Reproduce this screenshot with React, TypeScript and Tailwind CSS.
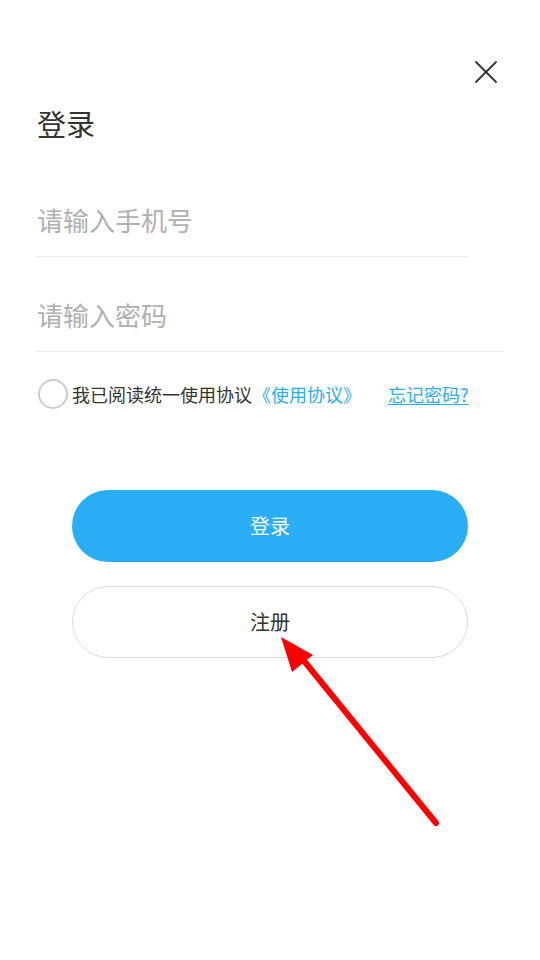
import React from "react";

export default function App() {
  return (
    <div
      className="relative w-[540px] h-[960px] bg-white overflow-hidden"
      style={{ fontFamily: '"Noto Sans CJK SC", "Noto Sans", sans-serif' }}
    >
      <div className="flex justify-end pt-[61px] pr-[43px]">
        <svg width="22" height="22" viewBox="0 0 22 22" fill="none" stroke="#333" strokeWidth="1.8" strokeLinecap="round">
          <line x1="1" y1="1" x2="21" y2="21" />
          <line x1="21" y1="1" x2="1" y2="21" />
        </svg>
      </div>

      <div className="pl-[37px] mt-[24px] text-[29px] leading-[32px] text-[#333]">登录</div>

      <div className="ml-[36px] w-[432px] mt-[60px] h-[58px] flex items-center border-b border-[#eeeeee] text-[26px] text-[#b0b0b0]">
        <span className="leading-[30px] pb-[16px] pl-[1px]">请输入手机号</span>
      </div>

      <div className="ml-[36px] w-[468px] mt-[37px] h-[58px] flex items-center border-b border-[#eeeeee] text-[26px] text-[#b0b0b0]">
        <span className="leading-[30px] pb-[16px] pl-[1px]">请输入密码</span>
      </div>

      <div className="flex items-center ml-[38px] mt-[26px] h-[32px] text-[18px]">
        <div className="w-[30px] h-[30px] rounded-full border-2 border-[#cccccc] shrink-0"></div>
        <span className="ml-[4px] text-[#333]">我已阅读统一使用协议</span>
        <span className="ml-[1px] text-[#29abf0]">《使用协议》</span>
        <span className="ml-[27px] text-[#29abf0] underline underline-offset-2">忘记密码?</span>
      </div>

      <div className="mx-[72px] mt-[80px] flex flex-col gap-[24px]">
        <div className="h-[72px] rounded-full bg-[#29adf4] flex items-center justify-center text-white text-[20px]">
          登录
        </div>
        <div className="h-[72px] rounded-full border border-[#dddddd] bg-white flex items-center justify-center text-[#333] text-[20px]">
          注册
        </div>
      </div>

      <svg className="absolute left-0 top-0 pointer-events-none" width="540" height="960">
        <line x1="436" y1="823" x2="300" y2="656" stroke="#ff0000" strokeWidth="6" strokeLinecap="round" />
        <polygon points="281,637 313,655 292,672" fill="#ff0000" />
      </svg>
    </div>
  );
}
